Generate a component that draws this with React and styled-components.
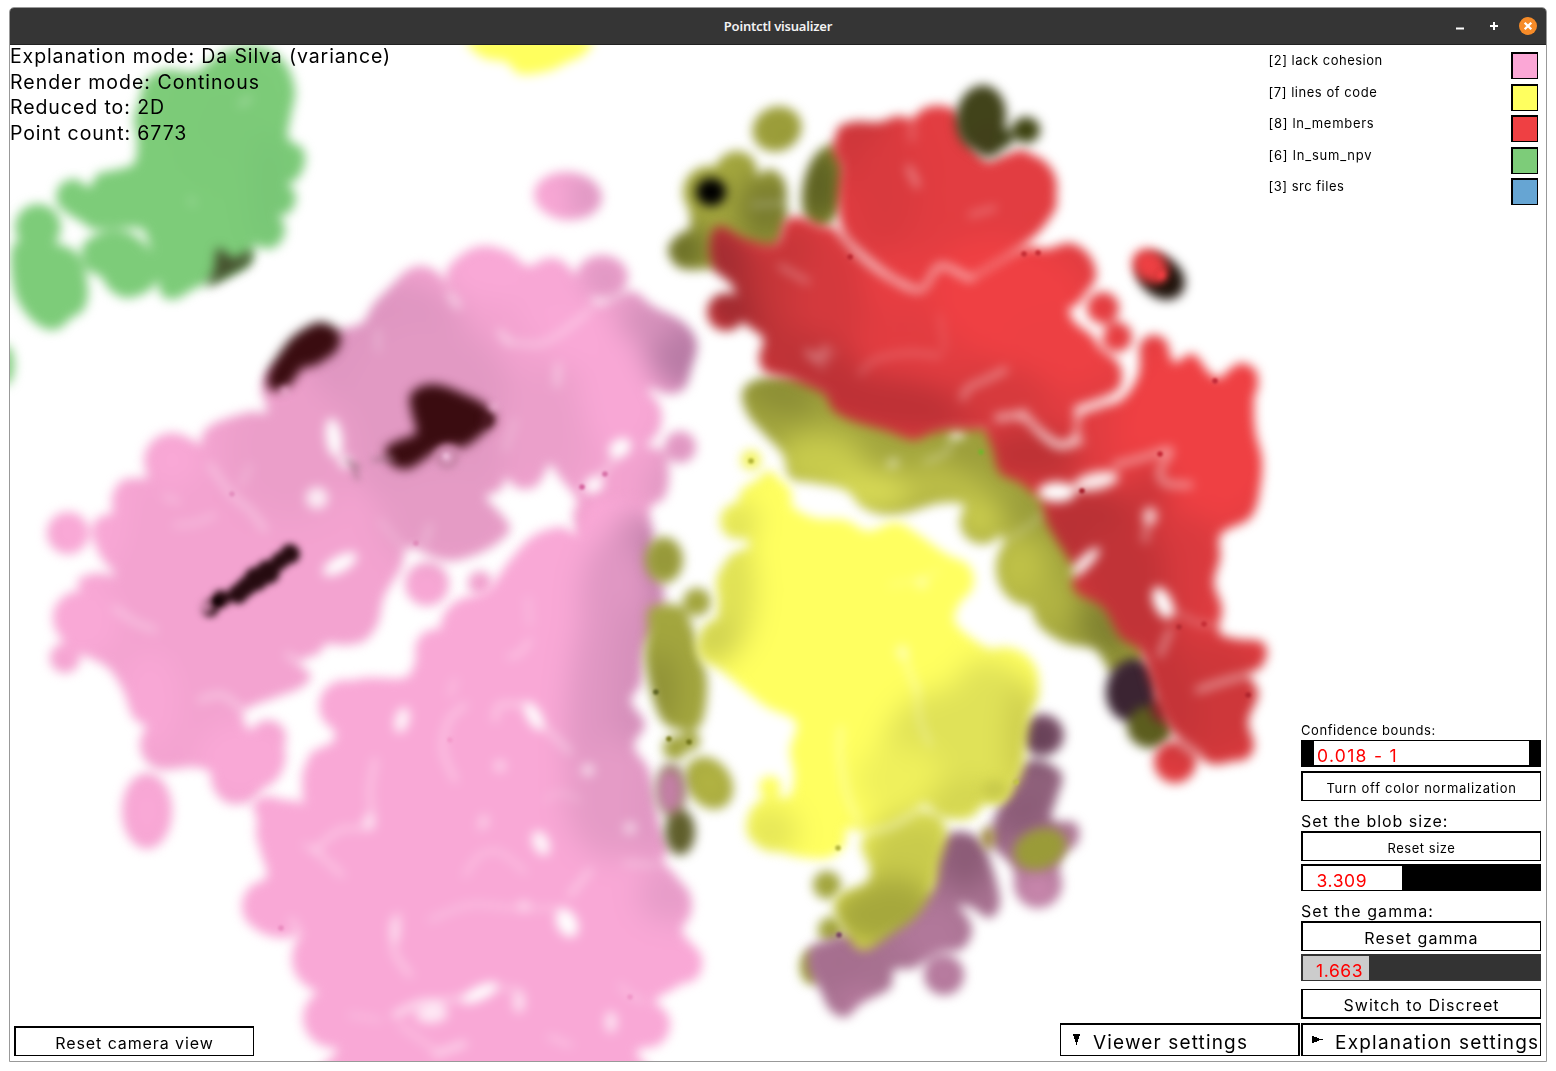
import React from "react";
import styled, { createGlobalStyle } from "styled-components";

const GlobalStyle = createGlobalStyle`
  * { box-sizing: border-box; }
  body { margin: 0; background: #fff; overflow: hidden; }
`;

const Desktop = styled.div`
  width: 1556px;
  height: 1071px;
  padding: 7px 9px 9px;
  font-family: Inter, "Noto Sans", sans-serif;
  color: #000;
`;
const Window = styled.main`
  width: 1538px;
  height: 1055px;
  display: flex;
  flex-direction: column;
  border: 1px solid #999;
  border-radius: 5px 5px 0 0;
  overflow: hidden;
`;
const TitleBar = styled.header`
  height: 37px;
  flex: none;
  display: grid;
  grid-template-columns: 1fr auto 1fr;
  align-items: center;
  background: #353535;
  border-bottom: 1px solid #222;
`;
const Title = styled.h1`
  grid-column: 2;
  margin: 0;
  font: 600 13px/20px "Noto Sans", sans-serif;
  letter-spacing: ${(p) => p.$ls}px;
  color: #f2f2f2;
`;
const WindowButtons = styled.div`
  grid-column: 3;
  display: flex;
  justify-content: flex-end;
  align-items: center;
  gap: 16px;
  padding-right: 9px;
`;
const WindowButton = styled.span`
  width: 18px;
  height: 18px;
  display: grid;
  place-items: center;
  border-radius: 50%;
  background: ${(p) => p.$bg || "transparent"};
  svg { display: block; }
`;
const Viewport = styled.section`
  position: relative;
  flex: 1;
  background: #fff;
`;
const Plot = styled.svg`
  position: absolute;
  inset: 0;
  width: 100%;
  height: 100%;
`;
const Hud = styled.div`
  position: relative;
  height: 100%;
  display: flex;
  flex-direction: column;
  justify-content: space-between;
`;
const HudRow = styled.div`
  display: flex;
  justify-content: space-between;
  align-items: ${(p) => p.$align};
  padding: ${(p) => p.$pad};
`;
const Info = styled.div`
  margin-top: -1px;
  font-size: 19.5px;
  line-height: 25.5px;
  white-space: nowrap;
`;
const Line = styled.div`
  letter-spacing: ${(p) => p.$ls || 0}px;
`;
const Legend = styled.div`
  width: 269.5px;
  margin-top: 7px;
  display: flex;
  flex-direction: column;
  gap: 4.5px;
`;
const LegendItem = styled.div`
  height: 27px;
  display: flex;
  justify-content: space-between;
  font-size: 13px;
  line-height: 16px;
  letter-spacing: ${(p) => p.$ls || 0}px;
`;
const Swatch = styled.span`
  width: 27px;
  height: 27px;
  border: solid #000;
  border-width: 2px 1px 1px 2px;
  background: ${(p) => p.$color};
`;
const Dock = styled.div`
  display: flex;
  align-items: flex-end;
  gap: 1px;
`;
const Controls = styled.div`
  width: 240px;
  display: flex;
  flex-direction: column;
`;
const Label = styled.div`
  height: 20px;
  margin-top: ${(p) => p.$top || 0}px;
  font-size: ${(p) => p.$size}px;
  line-height: 20px;
  letter-spacing: ${(p) => p.$ls || 0}px;
  white-space: nowrap;
`;
const Button = styled.button`
  width: 240px;
  height: ${(p) => p.$h || 30}px;
  margin: ${(p) => p.$top || 0}px 0 0;
  padding: ${(p) => p.$drop ?? 3}px 0 0;
  border: solid #000;
  border-width: ${(p) => p.$edge || "2px 1px 1px 2px"};
  background: #fff;
  color: #000;
  font-family: inherit;
  font-size: ${(p) => p.$size}px;
  letter-spacing: ${(p) => p.$ls || 0}px;
  white-space: nowrap;
  display: flex;
  align-items: center;
  justify-content: ${(p) => (p.$arrow ? "flex-start" : "center")};
  svg { flex: none; margin: -6px ${(p) => p.$gap || 0}px 0 ${(p) => p.$inset || 0}px; }
`;
const Slider = styled.div`
  height: 27px;
  margin-top: ${(p) => p.$top || 0}px;
  padding: ${(p) => p.$pad};
  background: ${(p) => p.$track};
  display: flex;
`;
const Fill = styled.div`
  width: ${(p) => p.$w}px;
  padding-left: ${(p) => p.$inset}px;
  background: ${(p) => p.$color};
  color: #f00;
  font-size: 17.5px;
  line-height: 29px;
  height: 24px;
  letter-spacing: ${(p) => p.$ls || 0}px;
  white-space: nowrap;
`;

/* Catmull-Rom curve through a flat list of coordinates. */
function smooth(flat, closed = true) {
  const p = [];
  for (let i = 0; i < flat.length; i += 2) p.push([flat[i], flat[i + 1]]);
  const n = p.length;
  const at = (i) => (closed ? p[(i + n) % n] : p[Math.max(0, Math.min(n - 1, i))]);
  let d = `M${p[0][0]} ${p[0][1]}`;
  for (let i = 0; i < (closed ? n : n - 1); i++) {
    const [a, b, c, e] = [at(i - 1), at(i), at(i + 1), at(i + 2)];
    d += `C${b[0] + (c[0] - a[0]) / 6} ${b[1] + (c[1] - a[1]) / 6} ${c[0] - (e[0] - b[0]) / 6} ${c[1] - (e[1] - b[1]) / 6} ${c[0]} ${c[1]}`;
  }
  return closed ? d + "Z" : d;
}

/* shades and spots: [cx, cy, rx, ry, rotation, colour] */
const Spots = ({ items }) =>
  items.map(([x, y, rx, ry, rot, fill], i) => (
    <ellipse key={i} cx={x} cy={y} rx={rx} ry={ry} fill={fill} transform={`rotate(${rot} ${x} ${y})`} />
  ));

function Cluster({ id, fill, outlines, circles = [], shades = [], cracks = [], gaps = [] }) {
  return (
    <g filter="url(#soft)">
      <clipPath id={id}>
        {outlines.map((o, i) => <path key={i} d={smooth(o)} />)}
        {circles.map(([x, y, rx, ry = rx, rot = 0], i) => (
          <ellipse key={"c" + i} cx={x} cy={y} rx={rx} ry={ry} transform={`rotate(${rot} ${x} ${y})`} />
        ))}
      </clipPath>
      <g clipPath={`url(#${id})`}>
        <rect x="0" y="20" width="1556" height="1060" fill={fill} />
        <g filter="url(#shade)"><Spots items={shades} /></g>
        {cracks.map(([w, o, ...pts], i) => (
          <path key={i} d={smooth(pts, false)} fill="none" stroke="#fff" strokeWidth={w} strokeOpacity={o} strokeLinecap="round" />
        ))}
        {gaps.map(([x, y, rx, ry, rot, o = 1], i) => (
          <ellipse key={i} cx={x} cy={y} rx={rx} ry={ry} fill="#fff" fillOpacity={o} transform={`rotate(${rot} ${x} ${y})`} />
        ))}
      </g>
    </g>
  );
}

const green = {
  id: "green", fill: "#7dcc79",
  outlines: [
    [212,60,232,49,262,47,285,63,295,90,291,115,288,138,302,148,305,162,298,178,286,186,295,198,290,212,274,218,284,230,279,244,266,249,254,245,252,258,238,270,210,282,192,290,176,299,162,296,158,280,157,266,149,244,143,230,128,228,110,229,92,229,82,222,67,213,57,198,61,184,76,179,89,187,98,174,115,170,134,163,137,140,134,120,140,98,146,80,165,70,195,72],
    [12,248,30,240,62,245,80,257,88,288,84,309,70,319,60,328,46,329,28,316,14,290],
    [83,245,105,231,128,232,145,244,160,266,152,288,128,298,110,290,101,277,86,268],
  ],
  circles: [[38,227,23],[5,365,9,20],[72,197,16],[290,160,15],[282,198,14],[268,230,17]],
  shades: [[225,125,40,50,0,"#7cca78"],[270,190,20,60,0,"#78c676"]],
  cracks: [[3,.5,240,105,250,98],[5,.3,191,200,193,203]],
};

const pinkUpper = {
  id: "pinkUpper", fill: "#f3a3d0",
  outlines: [
    [250,412,267,412,262,390,268,372,290,360,318,343,340,330,362,323,373,305,387,290,407,271,422,266,438,276,449,292,447,270,467,251,487,246,510,253,528,266,550,258,567,265,578,280,596,304,612,300,633,291,653,306,683,322,697,343,691,370,684,389,667,394,650,388,651,398,661,417,657,432,643,444,664,452,669,477,664,498,653,505,635,525,590,545,573,518,577,500,561,479,550,464,543,477,533,488,519,487,508,477,500,490,486,497,500,513,510,528,500,541,480,553,453,561,433,557,413,548,405,552,401,568,384,597,378,623,364,641,343,645,327,644,318,654,306,658,300,664,311,676,300,688,277,697,247,709,244,722,255,732,272,721,285,731,284,745,285,762,275,781,250,795,232,804,217,794,211,773,193,767,163,768,141,747,147,728,133,717,123,690,107,667,80,653,60,637,53,617,60,600,80,593,78,580,97,573,115,575,101,557,92,533,98,518,113,512,112,497,123,480,148,477,145,460,153,441,173,433,193,440,201,445,203,433,217,422],
  ],
  circles: [[68,533,21],[65,658,15],[427,584,22],[480,583,12],[147,811,25,38],[602,277,26,22],[680,447,16],[568,196,34,24,5],[172,461,28],[137,503,25],[80,618,27],[238,777,27],[268,738,18],[346,612,33],[487,278,38,31],[421,300,29,34],[551,284,23,26],[522,462,17,27],[668,374,19],[165,745,25],[632,418,30]],
  shades: [
    [385,350,85,70,-20,"#df96c1"],[430,420,90,100,0,"#e299c3"],[450,520,70,50,0,"#e59bc5"],[290,450,65,70,0,"#eb9ec9"],[545,430,45,65,0,"#eb9fca"],
    [490,270,45,30,0,"#f9a8d6"],[553,295,40,45,0,"#f8a7d5"],[620,390,40,60,0,"#f8a7d5"],[575,330,35,35,0,"#f9a8d6"],
    [680,350,34,45,-20,"#b87ba5"],[650,320,30,25,0,"#d490ba"],[604,278,22,18,0,"#d994bf"],[682,448,14,14,0,"#c889b1"],[662,488,14,24,0,"#dc95bf"],
    [90,500,40,80,0,"#f8a7d5"],[80,620,40,40,0,"#f9a8d6"],[172,460,28,28,0,"#f9a8d6"],[245,760,50,40,0,"#f9a8d6"],[150,700,30,50,0,"#f8a7d5"],[427,584,20,20,0,"#faa9d7"],[147,811,26,38,0,"#f9a8d6"],[68,533,20,20,0,"#faa9d7"],
    [550,200,18,20,0,"#faa9d7"],[588,196,18,20,0,"#d996c0"],
  ],
  cracks: [
    [6,.6,450,295,458,306],[6,.5,500,332,508,342],[5,.4,508,342,540,344,565,330,590,310],[5,.5,558,365,557,385],[4,.35,378,330,378,350],[3,.35,380,520,405,550],
    [5,.4,210,465,232,495,250,510,265,530],[4,.35,175,525,195,523,215,515],[4,.3,250,465,242,485],[5,.4,115,608,135,622,155,630],[5,.45,200,700,222,695,245,712],[5,.5,288,655,300,664],[4,.3,515,420,505,450],[4,.4,430,525,424,545],[4,.4,165,497,178,502],[5,.45,620,455,585,490],
  ],
  gaps: [[334,438,8,20,-8],[345,462,6,6,0],[317,498,11,11,0,.8],[340,564,19,8,-30],[620,448,12,9,-35],[594,485,10,8,-35],[612,536,10,15,0,1]],
};

const pinkLower = {
  id: "pinkLower", fill: "#f9a8d6",
  outlines: [
    [510,560,533,536,561,527,577,533,585,517,600,500,638,504,652,525,656,560,664,593,660,625,645,647,641,683,631,701,645,724,634,746,648,768,654,793,660,825,669,848,663,861,677,877,692,904,682,930,701,955,698,972,677,987,655,1002,670,1020,661,1040,637,1052,627,1080,340,1080,337,1050,317,1040,303,1020,310,999,323,987,300,980,292,960,299,937,280,938,257,930,242,907,250,887,267,876,260,850,257,820,253,803,267,796,290,803,307,816,302,793,307,767,311,753,332,742,334,730,320,711,329,690,363,678,403,678,414,665,420,640,440,630,447,613,470,597,490,587],
  ],
  circles: [[647,1025,23],[266,907,24],[327,958,35],[663,905,29],[684,965,18],[333,1018,30],[345,706,26],[338,780,36],[288,832,32],[474,630,34],[436,650,21]],
  shades: [
    [610,600,30,60,0,"#e097c3"],[640,600,40,90,0,"#d18db7"],[658,580,20,60,0,"#bb7da6"],[610,680,40,140,8,"#e097c3"],[632,700,20,100,0,"#d690bb"],[652,740,26,90,0,"#d690bb"],[615,800,50,60,0,"#e59bc6"],[655,805,20,60,0,"#e097c3"],[670,895,32,28,0,"#e69cc8"],
  ],
  cracks: [
    [5,.4,465,705,449,720,443,750,455,780],[4,.3,528,598,530,625],[4,.45,530,640,520,653,509,657],[5,.45,495,720,500,705,528,705],[5,.45,542,725,560,742,570,752],[4,.35,455,680,450,695],[4,.3,485,815,480,830],
    [5,.4,375,760,370,790,370,825,340,830,315,850],[5,.4,315,850,342,875],[4,.35,465,875,480,855,500,852,525,872],[3,.3,545,800,560,793,580,800],[5,.45,590,870,570,895],
    [4,.35,430,920,470,905,515,908,565,908],[5,.45,398,915,394,950,410,975],[6,.7,395,1015,420,1003,440,1002],[5,.5,440,1002,465,997],[4,.4,500,988,520,990],[4,.35,620,985,630,995,645,1002],[6,.6,436,1054,464,1044],[5,.35,550,1037,570,1045],[4,.3,350,1015,380,1020],[4,.4,625,863,655,865],[5,.45,292,920,300,935],[4,.35,400,1025,435,1050],[4,.4,314,850,305,845],
  ],
  gaps: [[402,720,7,13,15,.9],[534,716,7,16,-30],[541,843,8,13,-25,.9],[567,923,10,15,-28],[480,993,20,7,-25,1],[432,1014,16,9,-5,.75],[611,1022,6,11,0,.7],[519,1002,6,11,0,.65],[395,930,5,14,0,.5],[588,770,6,6,0,.7],[630,828,6,6,0,.6],[500,766,6,6,0,.5],[369,822,6,9,0,.6],[484,822,5,6,0,.4],[524,906,6,6,0,.45]],
};

const olive = {
  id: "olive", fill: "#a3a63e",
  outlines: [
    [742,393,755,380,785,376,815,378,845,395,870,408,900,415,930,420,960,420,990,425,1010,445,1025,465,1045,480,1062,500,1072,525,1085,550,1095,580,1115,595,1130,615,1145,640,1140,665,1113,673,1095,650,1065,643,1040,627,1027,602,1004,590,996,570,1003,545,1000,535,980,541,962,528,965,506,940,503,900,514,870,510,845,490,815,483,790,478,783,455,765,435,748,415],
    [668,250,678,235,690,227,688,205,684,190,693,174,712,170,722,157,740,152,753,165,757,175,770,169,784,180,787,205,786,228,775,252,740,255,712,268,680,268],
    [650,608,680,606,693,628,700,655,707,680,704,715,694,730,668,726,655,705,645,660,648,630],
  ],
  circles: [[777,129,25,22,-25],[825,187,22,43,12],[664,560,19,23],[697,602,14],[675,748,12],[690,741,10],[709,783,22,28,-35],[827,885,14],[831,930,13],[811,967,11,17],[982,522,22],[1030,568,34,38],[889,488,38,27],[737,171,20],[709,192,26]],
  shades: [
    [820,462,45,30,0,"#c8cb4d"],[875,492,45,22,0,"#d8da56"],[945,485,40,24,0,"#bcbe48"],[980,520,22,20,0,"#cfd150"],[1020,570,28,36,0,"#c0c248"],[1045,605,30,24,0,"#b2b443"],[970,453,34,20,20,"#9b9d3b"],
    [780,393,40,20,15,"#8b8d35"],[1105,630,22,36,-30,"#7e8030"],[1030,510,18,22,0,"#989b3b"],
    [683,250,25,24,0,"#666a26"],[765,210,26,36,0,"#777a2d"],[820,185,26,45,0,"#5c6022"],[660,690,16,40,0,"#8d8f36"],[664,560,20,22,0,"#929439"],[710,783,22,24,0,"#b4b543"],[777,129,25,25,0,"#999b39"],
  ],
  cracks: [[3,.5,951,440,947,452,925,462],[4,.3,1000,545,1030,525,1048,510],[4,.35,753,205,785,203]],
  gaps: [[893,463,6,4,-30,.6],[957,434,8,5,0,.9]],
};

const red = {
  id: "red", fill: "#e23d41",
  outlines: [
    [837,130,853,122,880,122,897,116,912,118,925,108,943,106,958,116,965,133,985,160,1000,157,1023,150,1038,163,1048,187,1057,203,1044,226,1023,245,973,275,941,265,923,287,905,282,885,270,860,250,843,230,838,203,841,153],
    [710,240,720,226,747,239,775,243,785,221,800,217,820,225,838,230,860,254,887,274,920,289,941,267,970,277,1023,249,1047,249,1070,243,1089,255,1096,277,1083,297,1071,317,1092,336,1100,348,1119,364,1121,384,1108,398,1079,409,1074,435,1057,443,1037,429,1020,417,997,424,975,430,953,429,930,434,913,440,887,431,853,421,833,410,825,395,805,385,787,378,765,372,759,357,763,338,742,320,733,287,713,268],
    [985,420,1023,420,1053,446,1076,440,1083,412,1120,401,1138,376,1141,350,1154,336,1169,353,1175,363,1193,354,1210,374,1223,377,1240,363,1257,373,1254,398,1255,430,1262,462,1258,498,1249,519,1221,534,1220,558,1214,583,1222,608,1219,632,1237,639,1262,642,1266,658,1250,674,1258,694,1248,721,1253,744,1240,758,1213,764,1190,751,1173,733,1160,712,1150,680,1140,651,1120,637,1103,608,1075,591,1072,566,1057,541,1047,523,1040,501,1020,483,1000,473,993,451],
  ],
  circles: [[1175,762,21],[1103,308,16],[1117,337,15],[726,312,19],[1154,350,15],[1240,384,18],[1070,270,27],[1022,188,35],[941,130,24],[1226,493,33],[1250,657,15],[1238,745,16],[858,147,25]],
  shades: [
    [730,280,32,65,-20,"#a32d32"],[762,315,30,55,-20,"#b23034"],[805,295,45,75,-15,"#c73639"],[830,300,35,60,0,"#d4393d"],[810,370,60,35,20,"#bf3337"],[890,405,100,28,8,"#bd3136"],[865,145,32,50,0,"#cb363a"],[885,190,35,60,0,"#d93a3e"],
    [1010,300,85,60,20,"#ef4043"],[1060,350,60,40,0,"#ed4043"],[900,280,40,30,0,"#e83e42"],[1000,395,50,28,0,"#d63a3d"],[1030,455,50,28,0,"#bd3235"],
    [1200,430,85,95,0,"#ef4043"],[1090,535,65,48,10,"#b93135"],[1130,590,50,70,-15,"#c13337"],[1150,500,20,40,0,"#cc363a"],[1190,570,25,60,0,"#d83a3e"],[1200,700,75,65,0,"#ce373a"],[1170,690,24,55,-20,"#c43438"],[726,312,20,20,0,"#9b292f"],
  ],
  cracks: [
    [5,.6,838,231,860,256,886,276,920,290,940,266,970,279],[4,.45,970,279,1000,261,1023,247],[6,.4,909,168,917,185],[4,.35,970,215,995,208],[4,.4,780,266,808,282],[6,.4,808,352,818,360,825,348],[4,.3,912,100,912,140],
    [4,.25,860,374,875,360,910,353,940,356],[6,.4,963,398,968,388,985,380,1005,370],[8,.55,998,418,1023,416,1040,432,1060,445,1080,441],[9,.8,1078,410,1100,403,1122,392,1132,370,1134,350],[5,.4,1020,415,1025,410],
    [6,.5,1115,465,1145,457,1170,450,1160,470,1165,483,1190,485],[6,.4,1145,540,1148,520],[4,.35,1165,605,1195,622,1215,625],[5,.5,1170,630,1160,655],[6,.5,1198,690,1225,681,1256,673],[7,.5,1175,738,1200,757],[4,.2,835,350,820,370],[3,.2,940,315,945,350],
  ],
  gaps: [[1057,492,19,10,0],[1096,481,23,9,-12,.9],[1084,563,21,6,-45,.95],[1163,603,9,17,-25],[1080,317,14,7,45],[1095,328,12,6,30],[1150,516,7,9,0,.75],[1133,361,6,14,8,.9]],
};

const yellow = {
  id: "yellow", fill: "#ffff60",
  outlines: [
    [736,508,742,490,752,483,765,477,782,486,792,506,815,518,845,520,868,531,895,522,915,532,940,550,965,565,973,580,962,599,955,622,982,645,1002,652,1022,663,1039,690,1031,715,1026,745,1021,775,1003,802,985,804,970,818,945,818,925,806,908,820,890,830,868,833,847,829,845,845,828,858,800,857,775,850,751,840,747,821,760,807,788,797,794,775,790,750,796,722,767,707,745,690,720,670,702,660,697,642,715,626,718,600,717,580,730,556,750,545,735,530],
    [862,840,900,812,933,814,947,832,939,865,935,885,917,915,890,935,865,950,850,940,835,915,838,895,865,883,870,868],
  ],
  circles: [[751,460,10],[769,480,9],[738,521,18],[770,787,11],[772,498,20],[952,580,22],[1004,682,35],[775,824,28],[722,642,24],[745,585,29]],
  shades: [
    [733,590,22,60,0,"#dddf55"],[712,640,24,24,0,"#ced050"],[950,760,70,72,15,"#e0e258"],[1000,715,42,60,-30,"#e0e258"],[1022,740,14,60,0,"#caca4c"],[900,780,45,35,0,"#eff05c"],
    [770,832,28,26,0,"#e5e658"],[738,520,20,18,0,"#dddf57"],[910,855,50,40,0,"#c9cb4c"],[885,915,60,38,0,"#a6a83c"],[751,462,12,10,0,"#cfd04a"],[965,800,38,18,0,"#d2d450"],
  ],
  cracks: [[5,.4,904,650,907,665,917,690],[4,.35,917,690,920,720,930,745],[5,.4,841,728,840,755,848,798,860,823],[5,.5,868,832,890,827,908,817,925,805],[5,.6,945,820,955,828],[4,.2,890,585,925,578,938,570]],
  gaps: [[854,868,9,11,0,.95],[922,583,6,6,0,.4],[902,652,6,7,0,.45]],
};

const mauve = {
  id: "mauve", fill: "#a87291",
  outlines: [
    [1020,766,1042,761,1062,775,1056,800,1052,820,1075,823,1078,840,1060,858,1060,885,1050,905,1028,906,1016,885,1012,866,996,850,990,835,1000,805],
    [930,850,955,832,980,840,993,870,1000,903,989,918,968,906,935,900],
    [810,948,830,939,850,932,885,925,910,890,940,893,962,910,972,930,962,949,938,953,914,968,894,970,890,988,862,1003,846,1017,830,1010,820,990,808,970],
  ],
  circles: [[1042,735,22,21],[944,975,20],[1038,884,24],[1065,836,14]],
  shades: [[1040,785,30,35,0,"#8f617b"],[1020,815,30,24,0,"#8a5b76"],[965,855,28,35,0,"#8b5b76"],[1042,735,28,25,0,"#6a4459"],[1042,735,22,22,0,"#5f3b50"],[1038,890,26,20,0,"#cf8bb2"],[1070,838,15,15,0,"#b57b99"],[930,930,40,28,0,"#b1789a"],[840,965,28,24,0,"#a56e8e"],[944,975,20,20,0,"#be7fa5"],[860,1003,22,12,0,"#bd7da3"]],
};

/* freckles where a single point differs from its surroundings */
const dots = [
  [850,257,"#bb2830"],[1024,254,"#c62e36"],[1038,253,"#c62e36"],[1160,454,"#c62836"],[1082,491,"#a8222d"],[1215,381,"#c22a38"],[582,487,"#d4649e"],[605,474,"#d772a8"],[416,543,"#e08cba"],[232,494,"#e48fbf"],
  [981,452,"#76b32c"],[656,692,"#5e6424"],[669,739,"#7e8021"],[689,742,"#74781e"],[751,461,"#b4b63a"],[839,935,"#794563"],[281,928,"#ea8cc0"],[1248,695,"#b0262e"],[630,997,"#f096c8"],[450,740,"#f49ccc"],[1016,782,"#c0c244"],[838,848,"#b4b63c"],[1179,627,"#b52c33"],[1204,624,"#c62e36"],
];

const darkPaths = [
  ["#3a0c10", [268,374,281,351,296,334,320,322,339,332,337,350,316,365,302,369,289,386,270,390]],
  ["#3a0c10", [410,396,422,386,440,385,462,393,484,404,495,420,481,435,464,447,448,446,434,452,422,461,407,469,391,464,386,448,402,439,416,433,412,414]],
];
const ants = [[210,608,11],[221,599,11],[238,594,12],[246,587,12],[256,579,14],[268,572,14],[280,561,11],[290,554,12]];

const region = { filterUnits: "userSpaceOnUse", x: -20, y: 0, width: 1600, height: 1100, colorInterpolationFilters: "sRGB" };

function PointCloud() {
  return (
    <Plot viewBox="10 45 1536 1016" preserveAspectRatio="none" aria-label="Projection">
      <defs>
        {[["soft", 5.2], ["shade", 13], ["mid", 3.6], ["dot", 2], ["fine", 1.3]].map(([id, s]) => (
          <filter key={id} id={id} {...region}><feGaussianBlur stdDeviation={s} /></filter>
        ))}
      </defs>
      <Cluster {...green} />
      <Cluster {...pinkUpper} />
      <Cluster {...pinkLower} />
      <Cluster {...olive} />
      <g filter="url(#soft)">
        <Spots items={[
          [1132,690,26,32,10,"#3b2432"],[1150,727,23,21,0,"#5c5d1e"],[1160,710,10,12,0,"#702a2a"],
          [1161,277,26,20,40,"#20140c"],
        ]} />
      </g>
      <Cluster {...mauve} />
      <Cluster {...yellow} />
      <Cluster {...red} />
      <g filter="url(#soft)">
        <path d={smooth([474,38,584,38,584,54,568,62,548,71,520,74,506,62,482,57])} fill="#ffff5e" />
        <path d={smooth([214,270,218,248,234,258,250,250,250,263,236,272,208,286])} fill="#46522f" />
        {darkPaths.map(([c, p], i) => <path key={i} d={smooth(p)} fill={c} />)}
        <Spots items={[
          [711,192,15,14,0,"#000"],[981,118,25,33,8,"#41431a"],[988,140,17,17,-20,"#41401a"],[1004,138,9,10,0,"#3d4218"],[1026,130,14,13,0,"#3d4210"],
          [1150,266,19,16,40,"#ee4043"],[1040,849,27,20,-20,"#9a9b38"],[988,838,7,11,0,"#a08a3c"],[995,790,14,10,0,"#c9cb4c"],
          [680,832,15,23,0,"#605f2c"],[671,790,16,27,0,"#8a7a50"],[670,791,12,22,0,"#c47fa6"],
        ]} />
      </g>
      <g filter="url(#mid)">
        <circle cx="447" cy="457" r="12" fill="#c683a6" />
        <circle cx="447" cy="457" r="5" fill="#eeb6da" />
        <circle cx="494" cy="407" r="4" fill="#f3b7da" />
        <circle cx="285" cy="391" r="4" fill="#f6b5db" />
        <circle cx="487" cy="420" r="6" fill="#4a1720" />
        <path d="M346 460L360 468M352 463L358 480M372 460L395 458" stroke="#8d6a78" strokeWidth="4" strokeOpacity=".6" fill="none" />
        {ants.map(([x, y, r], i) => <circle key={i} cx={x} cy={y} r={r - 2} fill="#260b10" />)}
        <circle cx="207" cy="607" r="6" fill="#c884a8" />
        <circle cx="1160" cy="275" r="6" fill="#e03a3c" />
      </g>
      <g filter="url(#dot)">
        <circle cx="446" cy="456" r="2" fill="#fbd4ea" />
        <circle cx="1161" cy="275" r="3" fill="#fa4046" />
        <circle cx="218" cy="601" r="4" fill="#140307" />
      </g>
      <g filter="url(#fine)">{dots.map(([x, y, c], i) => <circle key={i} cx={x} cy={y} r="2.8" fill={c} />)}</g>
    </Plot>
  );
}

const info = [
  ["Explanation mode: Da Silva (variance)", 0.88],
  ["Render mode: Continous", 1.0],
  ["Reduced to: 2D", 0.93],
  ["Point count: 6773", 0.91],
];
const legend = [
  ["[2] lack cohesion", "#fba7d6", 0.5],
  ["[7] lines of code", "#ffff5f", 0.54],
  ["[8] ln_members", "#ef4043", 0.7],
  ["[6] ln_sum_npv", "#7dcc79", 0.78],
  ["[3] src files", "#66a5d3", 0.5],
];

export default function App() {
  return (
    <Desktop>
      <GlobalStyle />
      <Window>
        <TitleBar>
          <Title $ls={-0.2}>Pointctl visualizer</Title>
          <WindowButtons>
            <WindowButton><svg width="18" height="18"><path d="M5 11.5h8" stroke="#fff" strokeWidth="2" /></svg></WindowButton>
            <WindowButton><svg width="18" height="18"><path d="M5 9h8M9 5v8" stroke="#fff" strokeWidth="2" /></svg></WindowButton>
            <WindowButton $bg="#f68b28"><svg width="18" height="18"><path d="M5.7 5.7l6.6 6.6M12.3 5.7l-6.6 6.6" stroke="#fff" strokeWidth="2.3" /></svg></WindowButton>
          </WindowButtons>
        </TitleBar>
        <Viewport>
          <PointCloud />
          <Hud>
            <HudRow $align="flex-start" $pad="0 8px 0 0">
              <Info>{info.map(([t, ls]) => <Line key={t} $ls={ls}>{t}</Line>)}</Info>
              <Legend>
                {legend.map(([t, c, ls]) => (
                  <LegendItem key={t} $ls={ls}><span>{t}</span><Swatch $color={c} /></LegendItem>
                ))}
              </Legend>
            </HudRow>
            <HudRow $align="flex-end" $pad="0 5px 5px 4px">
              <Button $size={16} $ls={0.9}>Reset camera view</Button>
              <Dock>
                <Button $arrow $h={33} $size={19} $ls={1.15} $inset={12} $gap={12} $drop={4} $edge="2px 2px 1px 1px">
                  <svg width="8" height="11"><path d="M0 0h7v2H6v3H5v3H4v3H3V8H2V5H1V2H0z" /></svg>
                  Viewer settings
                </Button>
                <Controls>
                  <Label $size={13} $ls={0.57}>Confidence bounds:</Label>
                  <Slider $track="#000" $pad="1px 12px 2px 13px"><Fill $w={215} $inset={3} $ls={1.3} $color="#fff">0.018 - 1</Fill></Slider>
                  <Button $top={4} $size={13} $ls={0.73}>Turn off color normalization</Button>
                  <Label $top={10} $size={16} $ls={0.95}>Set the blob size:</Label>
                  <Button $size={13} $ls={0.53}>Reset size</Button>
                  <Slider $top={3} $track="#000" $pad="2px 1px 1px 2px"><Fill $w={99} $inset={13.5} $ls={0.6} $color="#fff">3.309</Fill></Slider>
                  <Label $top={10} $size={16} $ls={1.05}>Set the gamma:</Label>
                  <Button $size={16} $ls={1.05}>Reset gamma</Button>
                  <Slider $top={3} $track="#333" $pad="2px 1px 1px 2px"><Fill $w={66} $inset={13} $ls={0.6} $color="#ccc">1.663</Fill></Slider>
                  <Button $top={8} $size={16} $ls={1.05} $edge="1px 1px 2px 2px">Switch to Discreet</Button>
                  <Button $arrow $top={4} $h={33} $size={19} $ls={1.22} $inset={9} $gap={12} $drop={4}>
                    <svg width="11" height="7"><path d="M0 0h2v1h3v1h2v1h4v1H7v1H5v1H2v1H0z" /></svg>
                    Explanation settings
                  </Button>
                </Controls>
              </Dock>
            </HudRow>
          </Hud>
        </Viewport>
      </Window>
    </Desktop>
  );
}
